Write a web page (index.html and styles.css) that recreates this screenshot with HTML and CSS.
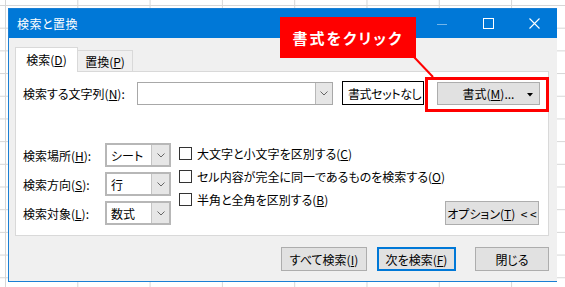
FILE: index.html
```html
<!DOCTYPE html>
<html lang="ja">
<head>
<meta charset="utf-8">
<title>検索と置換</title>
<link rel="stylesheet" href="styles.css">
</head>
<body>
<div class="dialog">
  <div class="titlebar">
    <span class="title">検索と置換</span>
    <div class="caption">
      <span class="cap cap-min"><svg width="10" height="10" viewBox="0 0 10 10"><line x1="0" y1="5.5" x2="10" y2="5.5" stroke="rgba(255,255,255,0.45)" stroke-width="1"/></svg></span>
      <span class="cap"><svg width="11" height="11" viewBox="0 0 11 11"><rect x="0.5" y="0.5" width="10" height="10" fill="none" stroke="#fff" stroke-width="1"/></svg></span>
      <span class="cap"><svg width="11" height="11" viewBox="0 0 11 11"><path d="M0.5 0.5 L10.5 10.5 M10.5 0.5 L0.5 10.5" stroke="#fff" stroke-width="1.1"/></svg></span>
    </div>
  </div>
  <div class="body">
    <div class="tabs">
      <div class="tab tab-active">検索(<u>D</u>)</div>
      <div class="tab">置換(<u>P</u>)</div>
    </div>
    <div class="panel">
      <div class="row1">
        <span class="lbl-find">検索する文字列(<u>N</u>):</span>
        <div class="combo combo-find">
          <span class="field"></span>
          <span class="drop"><svg width="8" height="5" viewBox="0 0 8 5"><polyline points="0.5,0.5 4,4 7.5,0.5" fill="none" stroke="#666" stroke-width="1"/></svg></span>
        </div>
        <div class="fmtbox">書式セットなし</div>
        <div class="btn btn-fmt"><span>書式(<u>M</u>)...</span><svg class="tri" width="6" height="4" viewBox="0 0 6 4"><polygon points="0,0 6,0 3,3.5" fill="#000"/></svg></div>
      </div>
      <div class="opts">
        <div class="selects">
          <div class="srow">
            <span class="slbl">検索場所(<u>H</u>):</span>
            <div class="combo combo-sm"><span class="field">シート</span><span class="drop"><svg width="8" height="5" viewBox="0 0 8 5"><polyline points="0.5,0.5 4,4 7.5,0.5" fill="none" stroke="#666" stroke-width="1"/></svg></span></div>
          </div>
          <div class="srow">
            <span class="slbl">検索方向(<u>S</u>):</span>
            <div class="combo combo-sm"><span class="field">行</span><span class="drop"><svg width="8" height="5" viewBox="0 0 8 5"><polyline points="0.5,0.5 4,4 7.5,0.5" fill="none" stroke="#666" stroke-width="1"/></svg></span></div>
          </div>
          <div class="srow">
            <span class="slbl">検索対象(<u>L</u>):</span>
            <div class="combo combo-sm"><span class="field">数式</span><span class="drop"><svg width="8" height="5" viewBox="0 0 8 5"><polyline points="0.5,0.5 4,4 7.5,0.5" fill="none" stroke="#666" stroke-width="1"/></svg></span></div>
          </div>
        </div>
        <div class="checks">
          <div class="chk"><span class="box"></span>大文字と小文字を区別する(<u>C</u>)</div>
          <div class="chk"><span class="box"></span>セル内容が完全に同一であるものを検索する(<u>O</u>)</div>
          <div class="chk"><span class="box"></span>半角と全角を区別する(<u>B</u>)</div>
        </div>
        <div class="btn btn-opt">オプション(<u>T</u>)&nbsp; &lt; &lt;</div>
      </div>
    </div>
    <div class="actions">
      <div class="btn btn-all">すべて検索(<u>I</u>)</div>
      <div class="btn btn-next">次を検索(<u>F</u>)</div>
      <div class="btn btn-close">閉じる</div>
    </div>
  </div>
  <div class="callout">書式をクリック</div>
  <div class="highlight"></div>
  <svg class="pointer" width="548" height="272" viewBox="0 0 548 272"><line x1="405" y1="48" x2="424" y2="68" stroke="#ff0000" stroke-width="2"/></svg>
</div>
</body>
</html>
```
FILE: styles.css
```css
html, body {
  margin: 0;
  padding: 0;
}
body {
  margin: 8px;
  font-family: "Noto Sans CJK JP", "Noto Sans", sans-serif;
  font-size: 12px;
  font-feature-settings: "palt";
  color: #000;
  background-color: #fff;
  background-image:
    linear-gradient(to right, #d6d6d6 1px, transparent 1px),
    linear-gradient(to bottom, #d6d6d6 1px, transparent 1px);
  background-size: 72.3px 100%, 100% 22.7px;
  background-position: 5px 0, 0 5px;
}
u { text-decoration: underline; text-underline-offset: 1px; }

.dialog {
  position: relative;
  width: 550px;
  height: 274px;
  box-sizing: border-box;
  border: 1px solid #1a7fd4;
  background: #f0f0f0;
  box-shadow: 2px 3px 6px rgba(0,0,0,0.22);
  display: flex;
  flex-direction: column;
}

.titlebar {
  height: 29px;
  background: #0078d7;
  color: #fff;
  display: flex;
  align-items: center;
  padding-left: 8px;
}
.title { flex: 1; font-size: 12px; line-height: 1; margin-top: 1px; letter-spacing: 0.5px; }
.caption { display: flex; height: 29px; }
.cap {
  width: 46px;
  display: flex;
  align-items: center;
  justify-content: center;
}
.cap svg { display: block; }

.body {
  flex: 1;
  padding: 9px 8px 0 6px;
  display: flex;
  flex-direction: column;
}

.tabs {
  display: flex;
  align-items: flex-end;
  height: 24px;
}
.tab {
  box-sizing: border-box;
  height: 21px;
  width: 56px;
  margin-left: -1px;
  border: 1px solid #d9d9d9;
  border-bottom: none;
  background: #f0f0f0;
  display: flex;
  align-items: center;
  justify-content: center;
  padding-top: 1px;
}
.tab-active {
  position: relative;
  z-index: 1;
  margin-left: 0;
  width: 63px;
  height: 25px;
  margin-bottom: -1px;
  background: #fff;
  padding-top: 0;
  padding-bottom: 1px;
}

.panel {
  box-sizing: border-box;
  height: 165px;
  border: 1px solid #d9d9d9;
  background: #fff;
  padding: 9px 0 0 7px;
}

.row1 {
  display: flex;
  align-items: center;
  height: 24px;
}
.lbl-find { width: 114px; }

.combo {
  box-sizing: border-box;
  display: flex;
  border: 1px solid #a8a8a8;
  background: #fff;
}
.combo .field {
  flex: 1;
  display: flex;
  align-items: center;
  padding-left: 5px;
}
.combo .drop {
  display: flex;
  align-items: center;
  justify-content: center;
  background: #e6e6e6;
  border-left: 1px solid #b8b8b8;
}
.drop svg { display: block; }
.combo-find { width: 196px; height: 23px; }
.combo-find .drop { width: 16px; }

.fmtbox {
  box-sizing: border-box;
  margin-left: 9px;
  width: 82px;
  height: 24px;
  border: 1px solid #000;
  background: #fff;
  display: flex;
  align-items: center;
  padding-left: 5px;
  letter-spacing: -0.4px;
  white-space: nowrap;
}

.btn {
  box-sizing: border-box;
  background: #e1e1e1;
  border: 1px solid #adadad;
  display: flex;
  align-items: center;
  justify-content: center;
  white-space: nowrap;
}
.btn-fmt {
  position: relative;
  margin-left: 13px;
  width: 103px;
  height: 23px;
}
.btn-fmt .tri {
  position: absolute;
  right: 6px;
  top: 10px;
}

.opts {
  display: flex;
  align-items: flex-start;
  margin-top: 37px;
}
.selects {
  display: flex;
  flex-direction: column;
  gap: 5px;
  margin-top: 1px;
}
.srow {
  display: flex;
  align-items: center;
  height: 24px;
}
.slbl { width: 82px; }
.combo-sm {
  width: 66px;
  height: 24px;
  border: 2px solid #b7b7b7;
}
.combo-sm .field { padding-left: 4px; }
.combo-sm .drop { width: 17px; border-left: 1px solid #c4c4c4; }

.checks {
  margin-left: 8px;
  display: flex;
  flex-direction: column;
}
.chk {
  height: 23px;
  display: flex;
  align-items: center;
  white-space: nowrap;
}
.box {
  box-sizing: border-box;
  width: 13px;
  height: 13px;
  border: 1px solid #333;
  background: #fff;
  margin-right: 5px;
}

.btn-opt {
  margin-left: auto;
  margin-right: 9px;
  margin-top: 59px;
  width: 102px;
  height: 24px;
}

.actions {
  display: flex;
  justify-content: flex-end;
  margin-top: 11px;
}
.actions .btn { height: 24px; }
.btn-all { width: 86px; margin-right: 10px; }
.btn-next { width: 79px; margin-right: 19px; border: 2px solid #0078d7; }
.btn-close { width: 74px; }

.callout {
  position: absolute;
  left: 271px;
  top: 8px;
  width: 136px;
  height: 41px;
  background: #ff0000;
  color: #fff;
  font-weight: bold;
  font-size: 15px;
  letter-spacing: 2px;
  display: flex;
  align-items: center;
  justify-content: center;
}
.highlight {
  position: absolute;
  left: 416px;
  top: 68px;
  width: 124px;
  height: 35px;
  box-sizing: border-box;
  border: 3px solid #ff0000;
}
.pointer {
  position: absolute;
  left: 0;
  top: 0;
  pointer-events: none;
}
```
